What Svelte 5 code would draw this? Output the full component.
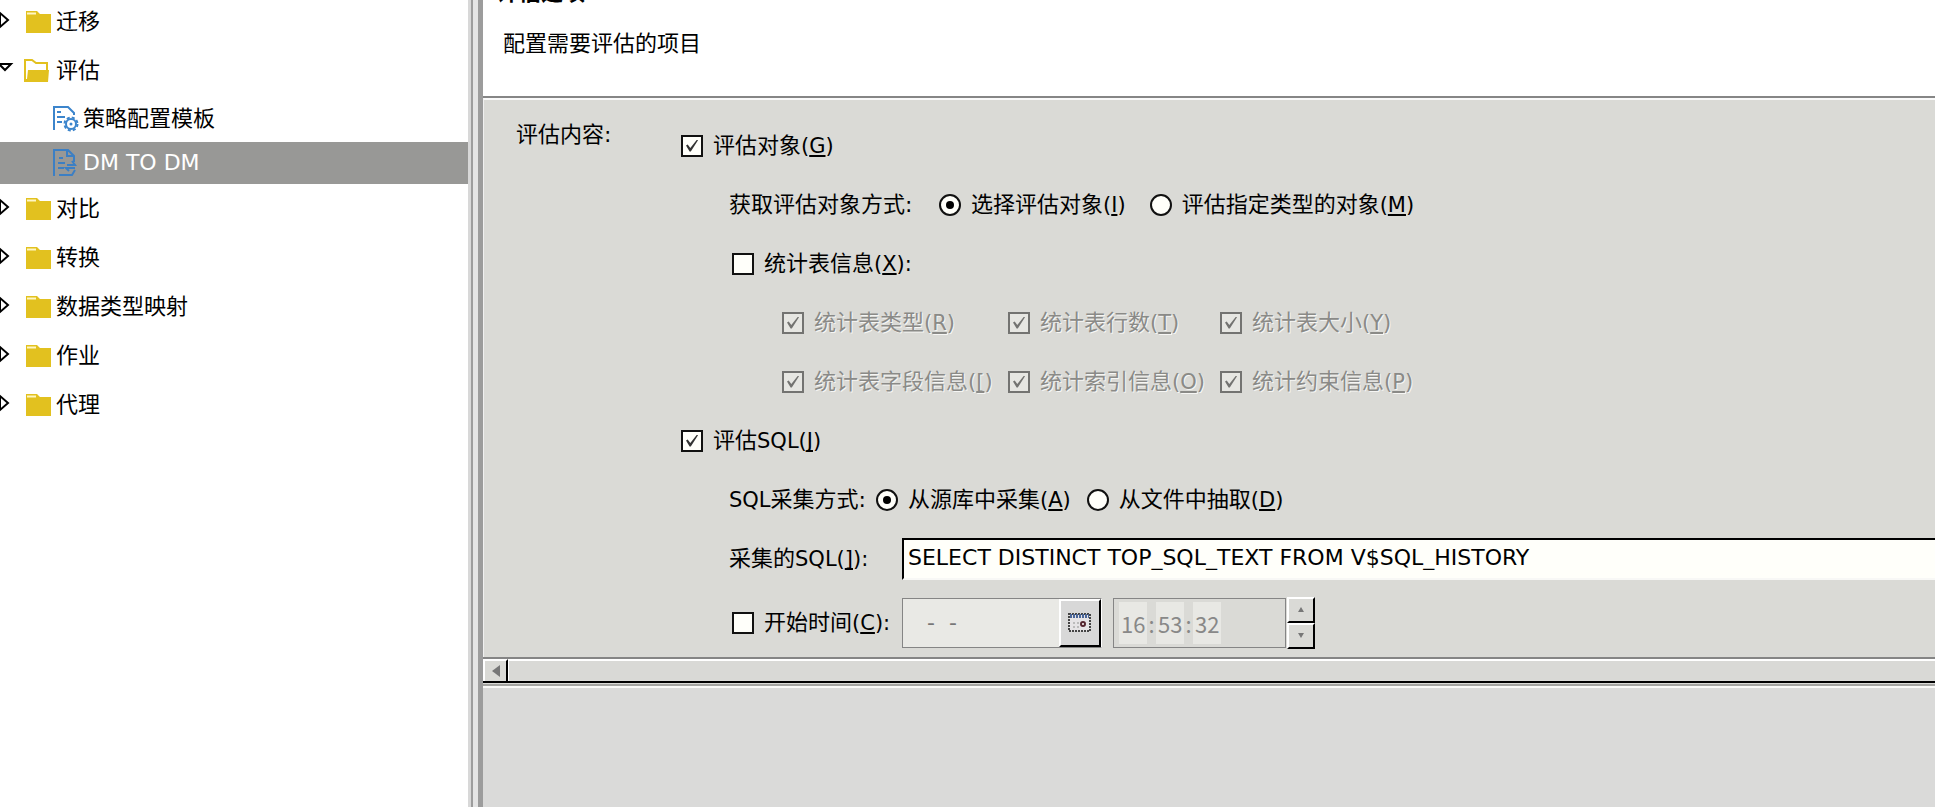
<script>
    let treeItems = [
        { name: '迁移', type: 'folder' },
        { name: '评估', type: 'open' },
        { name: '策略配置模板', type: 'template' },
        { name: 'DM TO DM', type: 'task' },
        { name: '对比', type: 'folder' },
        { name: '转换', type: 'folder' },
        { name: '数据类型映射', type: 'folder' },
        { name: '作业', type: 'folder' },
        { name: '代理', type: 'folder' }
    ];

    let selected = 'DM TO DM';

    // Options for the table statistics
    let tableStats = [
        { text: '统计表类型', key: 'R' },
        { text: '统计表行数', key: 'T' },
        { text: '统计表大小', key: 'Y' },
        { text: '统计表字段信息', key: '[' },
        { text: '统计索引信息', key: 'O' },
        { text: '统计约束信息', key: 'P' }
    ];

    let evalObjects = true;
    let evalSql = true;
    let tableInfo = false;
    let useStart = false;
    let objectMode = 'select';
    let sqlMode = 'source';
    let sql = 'SELECT DISTINCT TOP_SQL_TEXT FROM V$SQL_HISTORY';
</script>

<div class="window">
    <nav class="sidebar">
        {#each treeItems as item}
            <button class="tree-row {item.type}" class:selected={item.name === selected} on:click={() => selected = item.name}>
                {#if item.type === 'folder'}
                    <svg class="arrow" width="26" height="24" viewBox="0 0 26 24">
                        <path d="M0 3V17L8 10Z" fill="#fff" stroke="#000" stroke-width="2" />
                    </svg>
                    <svg class="icon" width="26" height="24" viewBox="0 0 26 24">
                        <path d="M0 1H11L14 4H25V23H0Z" fill="#e2c11f" />
                        <path d="M1 3.500H10" stroke="#fff6c4" stroke-width="2" />
                    </svg>
                {:else if item.type === 'open'}
                    <svg class="arrow" width="24" height="24" viewBox="0 0 24 24">
                        <path d="M-1 5H11L5 11Z" fill="#fff" stroke="#000" stroke-width="2" />
                    </svg>
                    <svg class="icon" width="28" height="24" viewBox="0 0 28 24">
                        <path d="M1 22V1H8L12 4H23V12" fill="none" stroke="#e2c11f" stroke-width="2" />
                        <path d="M4 11H25L24 23H0V20H3Z" fill="#e2c11f" />
                    </svg>
                {:else if item.type === 'template'}
                    <svg class="icon" width="26" height="26" viewBox="0 0 26 26">
                        <path d="M1 24V1H15L21 7V9M4 6H8M4 11H12M4 16H9" fill="none" stroke="#3c85cc" stroke-width="2" />
                        <circle cx="18" cy="18" r="5" fill="#fff" stroke="#3c85cc" stroke-width="2" />
                        <circle cx="18" cy="18" r="6.500" fill="none" stroke="#3c85cc" stroke-width="2" stroke-dasharray="3 2.105" />
                        <circle cx="18" cy="18" r="1.500" fill="#3c85cc" />
                    </svg>
                {:else}
                    <svg class="icon" width="26" height="28" viewBox="0 0 26 28">
                        <path d="M1 27V1H15L21 7V13M14 1V7H21M6 9H10M5 14H12M5 19H11M14 16H22L19 12M22 19H13L16 22M6 26H19L22 21" fill="none" stroke="#3c7fc4" stroke-width="2" />
                    </svg>
                {/if}
                <span>{item.name}</span>
            </button>
        {/each}
    </nav>

    <div class="sash"></div>

    <main class="main">
        <header class="header">
            <h1>评估选项</h1>
            <p>配置需要评估的项目</p>
        </header>

        <section class="content">
            <div class="content-title">评估内容:</div>
            <div class="options">
                <div class="row">
                    <label class="check"><input type="checkbox" bind:checked={evalObjects} /><span>评估对象<span class="latin">(<u>G</u>)</span></span></label>
                </div>
                <div class="row indent">
                    <span class="caption wide">获取评估对象方式:</span>
                    <label class="check"><input type="radio" value="select" bind:group={objectMode} /><span>选择评估对象<span class="latin">(<u>I</u>)</span></span></label>
                    <label class="check"><input type="radio" value="type" bind:group={objectMode} /><span>评估指定类型的对象<span class="latin">(<u>M</u>)</span></span></label>
                </div>
                <div class="row indent-check">
                    <label class="check"><input type="checkbox" bind:checked={tableInfo} /><span>统计表信息<span class="latin">(<u>X</u>):</span></span></label>
                </div>
                <div class="stats">
                    {#each tableStats as stat}
                        <label class="check" class:disabled={!tableInfo}>
                            <input type="checkbox" checked disabled={!tableInfo} />
                            <span>{stat.text}<span class="latin">(<u>{stat.key}</u>)</span></span>
                        </label>
                    {/each}
                </div>
                <div class="row">
                    <label class="check"><input type="checkbox" bind:checked={evalSql} /><span>评估<span class="latin">SQL(<u>J</u>)</span></span></label>
                </div>
                <div class="row indent sql-mode">
                    <span class="caption"><span class="latin">SQL</span>采集方式:</span>
                    <label class="check"><input type="radio" value="source" bind:group={sqlMode} /><span>从源库中采集<span class="latin">(<u>A</u>)</span></span></label>
                    <label class="check"><input type="radio" value="file" bind:group={sqlMode} /><span>从文件中抽取<span class="latin">(<u>D</u>)</span></span></label>
                </div>
                <div class="row indent">
                    <label class="field-label" for="sql">采集的<span class="latin">SQL(<u>]</u>):</span></label>
                    <input class="sql" id="sql" type="text" bind:value={sql} />
                </div>
                <div class="row indent-check time-row">
                    <label class="check time-label"><input type="checkbox" bind:checked={useStart} /><span>开始时间<span class="latin">(<u>C</u>):</span></span></label>
                    <div class="date">
                        <input type="text" value="-  -" aria-label="日期" disabled={!useStart} />
                        <button aria-label="选择日期" disabled={!useStart}>
                            <svg width="24" height="20" viewBox="0 0 24 20">
                                <rect x="1" y="1" width="21" height="17" fill="#e6e4e6" stroke="#444" stroke-width="2" stroke-dasharray="2 1" />
                                <path d="M2 3H21" stroke="#4a6699" stroke-width="4" stroke-dasharray="2 1" />
                                <path d="M5 10H12M5 14H12" stroke="#bbb" stroke-width="2" stroke-dasharray="2 2" />
                                <circle cx="15" cy="11" r="2" fill="#fff" stroke="#552630" stroke-width="2" />
                            </svg>
                        </button>
                    </div>
                    <div class="time">
                        <input type="text" value="16" aria-label="时" disabled={!useStart} /><span>:</span>
                        <input type="text" value="53" aria-label="分" disabled={!useStart} /><span>:</span>
                        <input type="text" value="32" aria-label="秒" disabled={!useStart} />
                    </div>
                    <div class="spinner">
                        <button aria-label="增加" disabled={!useStart}><svg width="6" height="5" viewBox="0 0 6 5"><path d="M0 5L3 0L6 5Z" fill="#777" /></svg></button>
                        <button aria-label="减少" disabled={!useStart}><svg width="6" height="5" viewBox="0 0 6 5"><path d="M0 0H6L3 5Z" fill="#777" /></svg></button>
                    </div>
                </div>
            </div>
        </section>

        <div class="scrollbar">
            <button aria-label="向左滚动"><svg width="8" height="12" viewBox="0 0 8 12"><path d="M8 0V12L0 6Z" fill="#777" /></svg></button>
            <div class="track"></div>
        </div>
        <footer class="footer"></footer>
    </main>
</div>

<style>
    :global(body) {
        overflow: hidden;
    }

    .window {
        display: flex;
        height: 100vh;
        overflow: hidden;
        background: #dadad6;
        color: #000;
        font-family: 'DejaVu Sans', 'Noto Sans CJK SC', sans-serif;
        font-size: 22px;
        line-height: 30px;
        white-space: nowrap;
    }

    button, input {
        margin: 0;
        padding: 0;
        border: 0;
        border-radius: 0;
        box-sizing: border-box;
        font: inherit;
        color: inherit;
    }

    svg {
        display: block;
        flex: none;
    }

    .latin {
        font-size: 21px;
    }

    u {
        text-decoration-thickness: 2px;
        text-underline-offset: 2px;
        text-decoration-skip-ink: none;
    }

    .sidebar {
        flex: none;
        width: 468px;
        margin-top: -3px;
        background: #fff;
    }

    .tree-row {
        display: flex;
        align-items: center;
        width: 100%;
        height: 49px;
        background: none;
        text-align: left;
    }

    .tree-row .icon {
        margin-right: 4px;
    }

    .tree-row.template, .tree-row.task {
        height: 47px;
        padding-left: 53px;
    }

    .tree-row.task {
        height: 42px;
    }

    .tree-row.selected {
        background: #989896;
        color: #fff;
    }

    /* divider between the tree and the editor */
    .sash {
        flex: none;
        box-sizing: border-box;
        width: 15px;
        border-left: 3px solid #d8d8d8;
        border-right: 5px solid #9c9c9c;
        background: linear-gradient(to right, #9c9c9c 2px, #e4e4e4 2px);
    }

    .main {
        flex: 1;
        min-width: 0;
        display: flex;
        flex-direction: column;
    }

    .header {
        box-sizing: border-box;
        height: 98px;
        padding-left: 20px;
        overflow: hidden;
        background: #fff;
        border-bottom: 2px solid #868686;
    }

    .header h1 {
        margin: -22px 0 21px -6px;
        font-size: 22px;
        line-height: 30px;
    }

    .header p {
        margin: 0;
    }

    .content {
        display: flex;
        padding: 16px 0 0 32px;
        border-top: 2px solid #fafafa;
        border-left: 1px solid #f0f0f0;
    }

    .content-title {
        flex: none;
        width: 165px;
        padding-top: 4px;
    }

    .options {
        flex: 1;
        min-width: 0;
    }

    .row {
        display: flex;
        align-items: center;
        height: 59px;
    }

    .indent {
        padding-left: 48px;
    }

    .indent-check {
        padding-left: 51px;
    }

    .check {
        display: flex;
        align-items: center;
        flex: none;
        gap: 10px;
    }

    .check + .check {
        margin-left: 24px;
    }

    .sql-mode .check + .check {
        margin-left: 16px;
    }

    .check input {
        appearance: none;
        display: grid;
        place-items: center;
        flex: none;
        width: 22px;
        height: 22px;
        border: 2px solid #111;
        background: #fffffa;
    }

    .check input[type='radio'] {
        border-radius: 50%;
    }

    .check input[type='radio']:checked::before {
        content: '';
        width: 8px;
        height: 8px;
        border-radius: 50%;
        background: #000;
    }

    .check input[type='checkbox']:checked::before {
        content: '';
        width: 12px;
        height: 12px;
        background: #333;
        clip-path: polygon(0 50%, 14% 42%, 36% 70%, 92% 0, 100% 6%, 40% 100%, 30% 100%);
    }

    .disabled {
        color: #8a8a87;
        text-shadow: 1px 1px #f6f6f4;
    }

    .check input:disabled {
        border-color: #737371;
        background: #e6e6e2;
    }

    .check input[type='checkbox']:disabled::before {
        background: #737371;
    }

    .caption {
        flex: none;
        width: 147px;
    }

    .caption.wide {
        width: 210px;
    }

    .stats {
        display: grid;
        grid-template-columns: 226px 212px auto;
        grid-auto-rows: 59px;
        padding-left: 101px;
    }

    .stats .check + .check {
        margin-left: 0;
    }

    .field-label {
        flex: none;
        width: 173px;
    }

    .time-label {
        width: 170px;
    }

    .sql {
        flex: 1;
        min-width: 0;
        height: 42px;
        padding: 0 4px 2px;
        border-top: 2px solid #000;
        border-left: 2px solid #000;
        border-bottom: 2px solid #f8f8f6;
        background: #fffffa;
    }

    .time-row {
        height: 69px;
    }

    .date {
        display: flex;
        box-sizing: border-box;
        width: 200px;
        height: 50px;
        margin-right: 11px;
        border: 1px solid #858585;
        border-right-color: #fff;
        background: #e9e9e5;
    }

    .date input {
        width: 156px;
        padding-left: 24px;
        background: none;
        color: #777;
    }

    .date button {
        flex: 1;
        display: grid;
        place-items: center;
        border: 2px solid #fff;
        border-right: 2px solid #000;
        border-bottom: 2px solid #000;
        background: #d8d8d8;
    }

    .time {
        display: flex;
        align-items: center;
        box-sizing: border-box;
        width: 173px;
        height: 50px;
        padding: 2px 5px;
        border: 1px solid #858585;
        font-family: 'Noto Sans CJK SC', sans-serif;
        color: #888;
    }

    .time input {
        width: 28px;
        height: 42px;
        padding-left: 2px;
        background: #e8e8e4;
    }

    .time span {
        width: 9px;
        text-align: center;
    }

    .spinner {
        display: flex;
        flex-direction: column;
        width: 28px;
        height: 52px;
        margin-left: 1px;
    }

    .spinner button {
        flex: 1;
        display: grid;
        place-items: center;
        border: 2px solid #fff;
        border-right-color: #000;
        border-bottom-color: #000;
        background: #dadad6;
    }

    .scrollbar {
        display: flex;
        height: 26px;
        box-sizing: border-box;
        border-top: 2px solid #858585;
        border-bottom: 2px solid #000;
    }

    .scrollbar button {
        display: grid;
        place-items: center;
        width: 25px;
        border: 2px solid #fff;
        border-right-color: #000;
        border-bottom: 0;
        background: #dadad6;
    }

    .track {
        flex: 1;
        border-top: 2px solid #fff;
        border-left: 1px solid #fff;
        background: #d9d9d6;
    }

    .footer {
        flex: 1;
        margin-top: 1px;
        border-top: 2px solid #a5a5a2;
        box-shadow: inset 0 2px #fafaf8;
        background: #dadad9;
    }
</style>
